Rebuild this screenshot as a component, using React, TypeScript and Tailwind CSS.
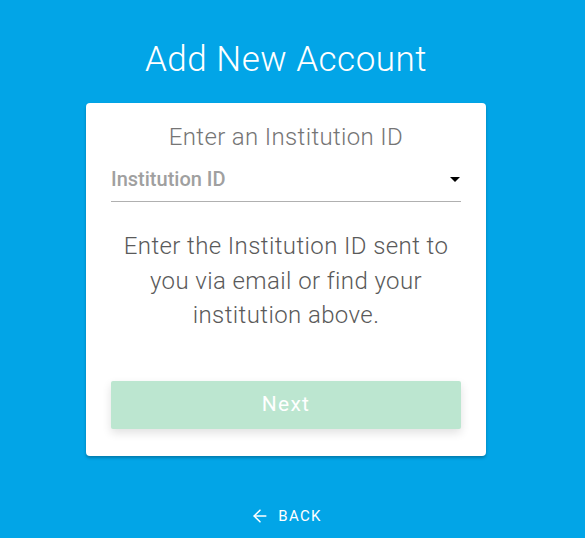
import { ArrowLeft } from "lucide-react"

export default function App() {
    return (
        <div
            className="min-h-[538px] w-full bg-[#02a5e7]"
            style={{ fontFamily: "Roboto, 'Liberation Sans', sans-serif" }}
        >
            <div className="w-[572px] flex flex-col items-center pt-[39px]">
                <h1 className="text-[35px] leading-[42px] font-light text-white tracking-[0.5px]">
                    Add New Account
                </h1>
                <div className="mt-[22px] w-[400px] bg-white rounded-[4px] shadow-[0_2px_3px_rgba(0,0,0,0.25)] px-[25px] pt-[19px] pb-[27px] flex flex-col">
                    <div className="text-center text-[24px] leading-[30px] font-light text-[#757575] tracking-[0.35px]">
                        Enter an Institution ID
                    </div>
                    <div className="flex items-center justify-between pt-[16px] pb-[11px] border-b border-[#b0b0b0]">
                        <span className="text-[20px] leading-[22px] font-medium text-[#a0a0a0]">Institution ID</span>
                        <span className="mr-[1px] w-0 h-0 border-l-[5px] border-r-[5px] border-t-[5px] border-l-transparent border-r-transparent border-t-black" />
                    </div>
                    <p className="mt-[27px] text-center text-[24px] leading-[34.5px] font-light text-[#5a5a5a] tracking-[0.4px]">
                        Enter the Institution ID sent to
                        <br />
                        you via email or find your
                        <br />
                        institution above.
                    </p>
                    <button className="mt-[48px] h-[48px] w-full rounded-[2px] bg-[#bce6d0] text-white text-[21px] font-normal tracking-[1.3px] shadow-[0_4px_10px_rgba(0,0,0,0.12)]">
                        Next
                    </button>
                </div>
                <button className="mt-[50px] flex items-center gap-[8px] text-white text-[15px] leading-[20px] tracking-[1.3px]">
                    <ArrowLeft size={20} strokeWidth={1.8} />
                    BACK
                </button>
            </div>
        </div>
    )
}
